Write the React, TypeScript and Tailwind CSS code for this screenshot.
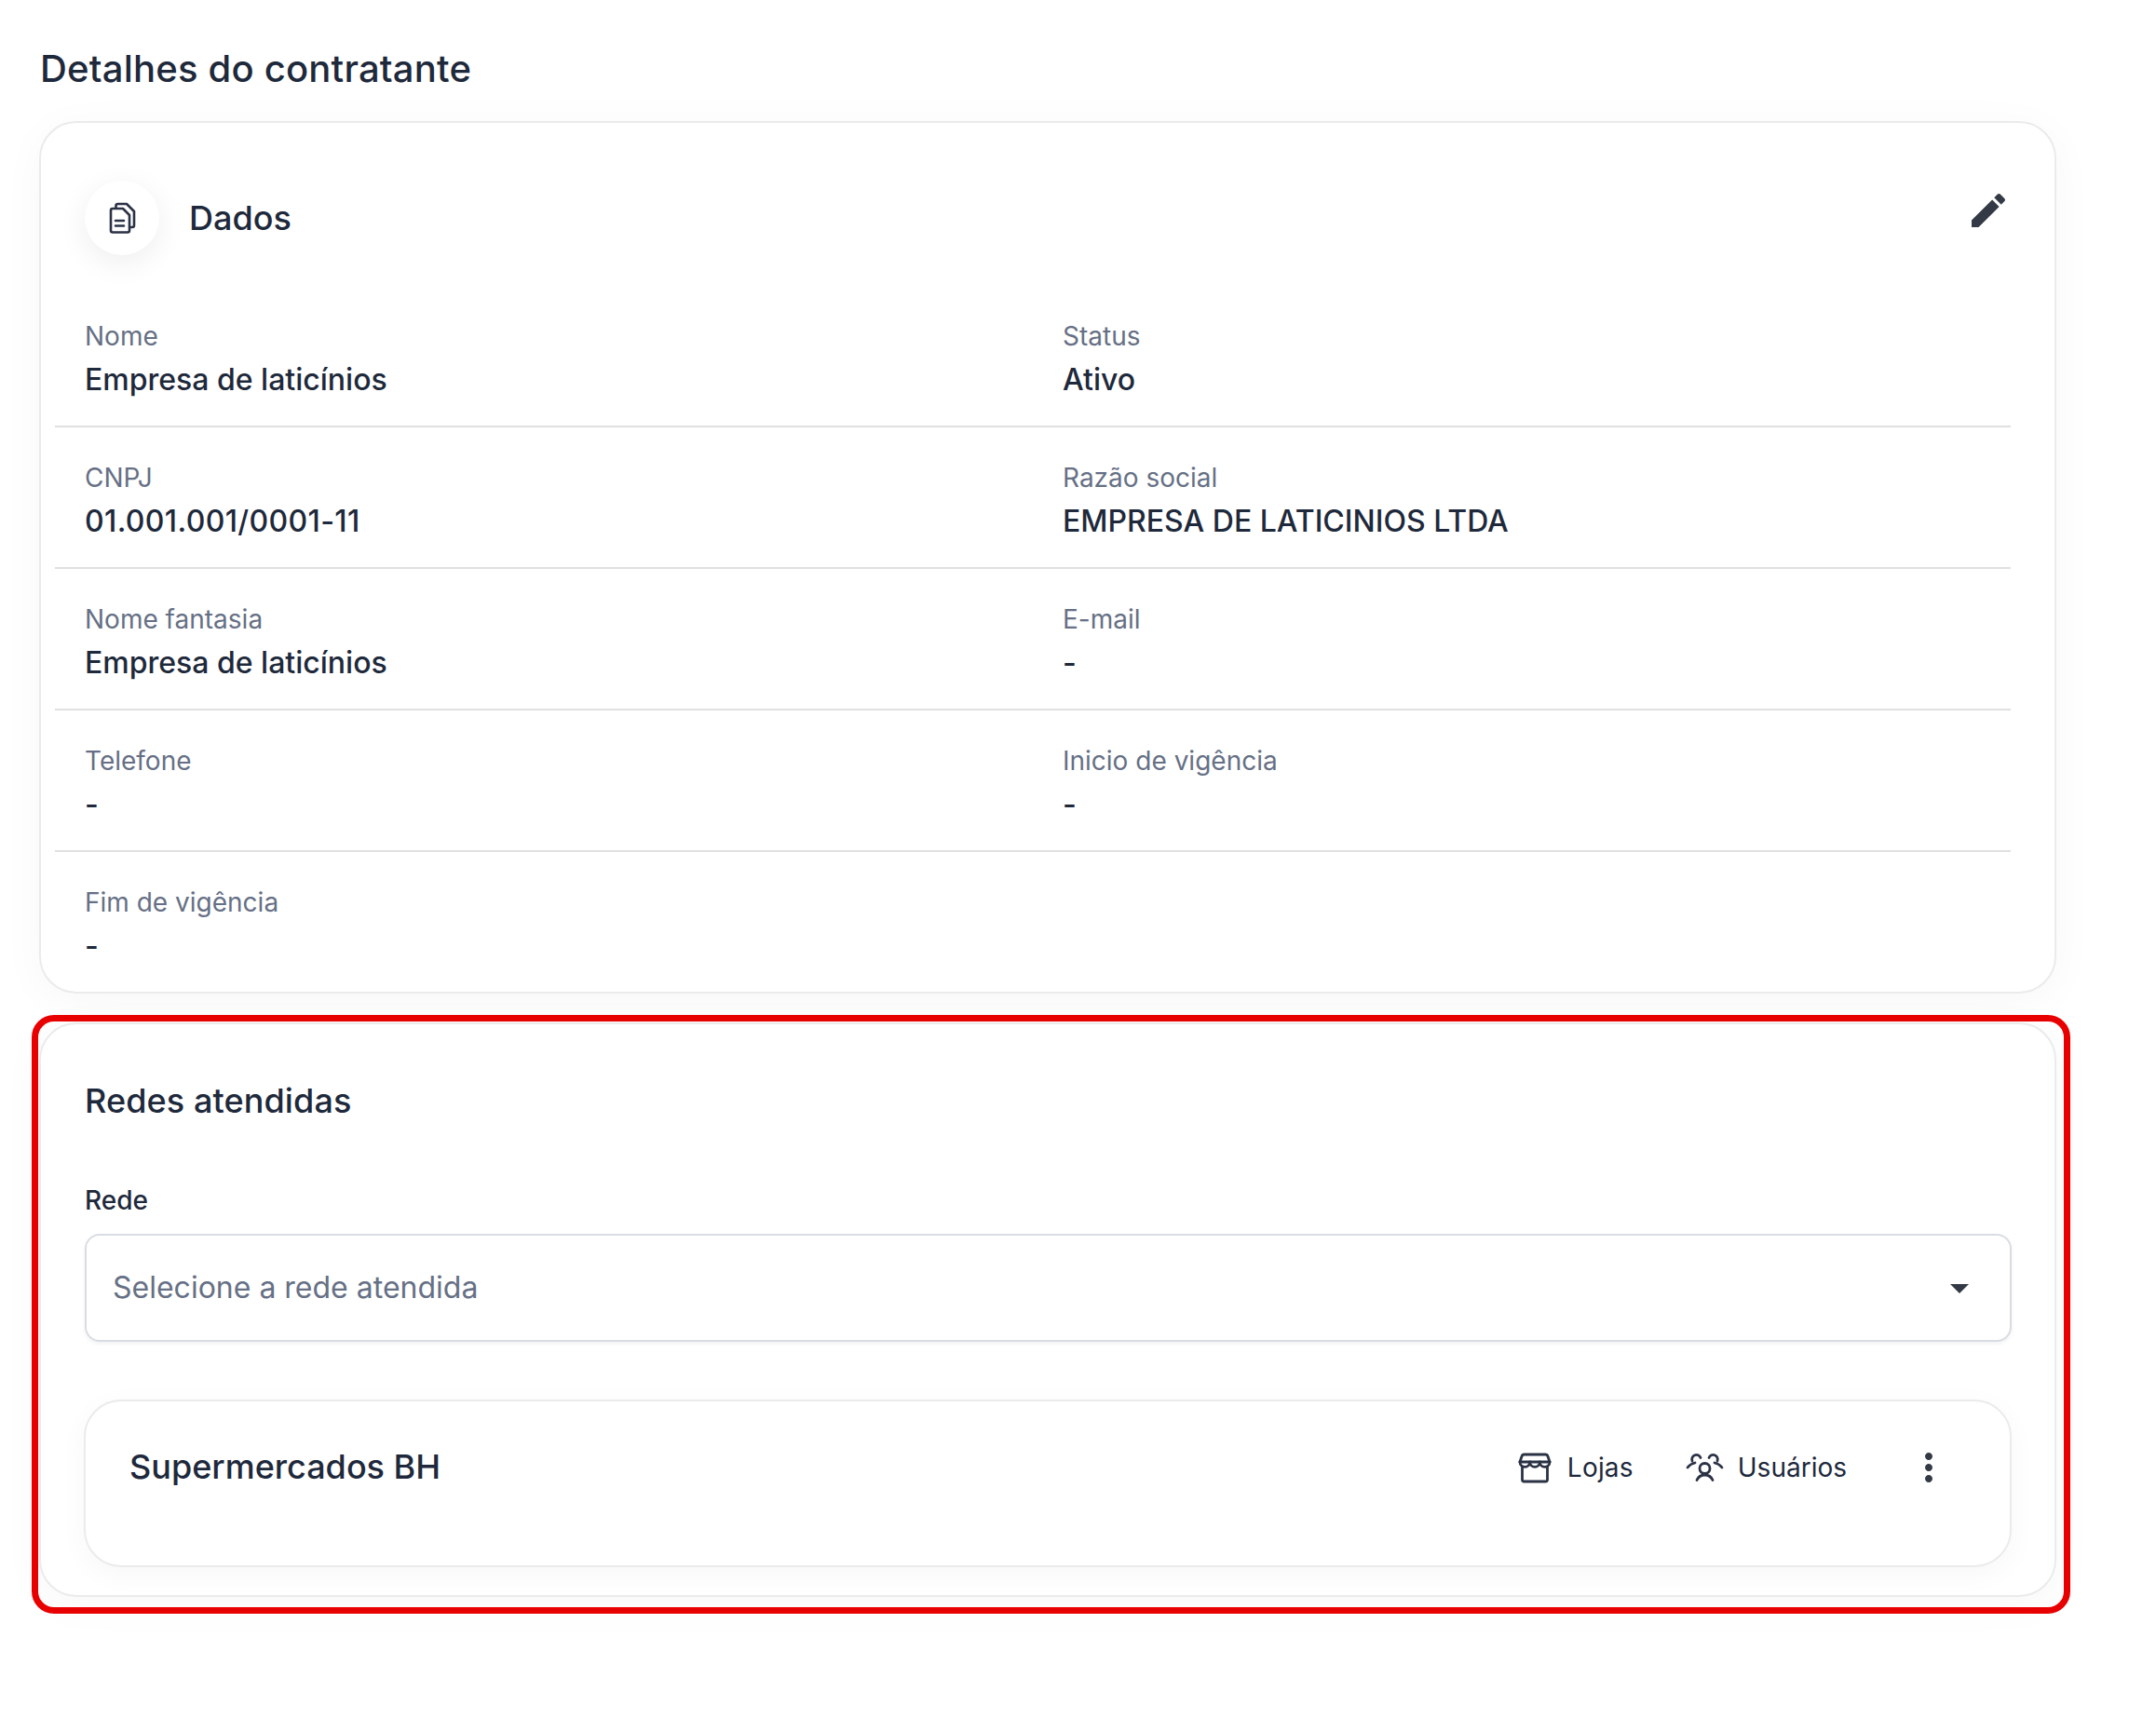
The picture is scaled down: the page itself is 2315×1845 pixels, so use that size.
import type { ReactNode } from 'react'

const rows = [
  [
    { label: 'Nome', value: 'Empresa de laticínios' },
    { label: 'Status', value: 'Ativo' },
  ],
  [
    { label: 'CNPJ', value: '01.001.001/0001-11', className: 'tracking-[0.35px]' },
    { label: 'Razão social', value: 'EMPRESA DE LATICINIOS LTDA' },
  ],
  [
    { label: 'Nome fantasia', value: 'Empresa de laticínios' },
    { label: 'E-mail', value: '-' },
  ],
  [
    { label: 'Telefone', value: '-' },
    { label: 'Inicio de vigência', value: '-' },
  ],
  [{ label: 'Fim de vigência', value: '-' }],
]

function Icon({ children, className }: { children: ReactNode; className?: string }) {
  return (
    <svg viewBox="0 0 48 48" fill="none" stroke="currentColor" strokeWidth="3" strokeLinecap="round" strokeLinejoin="round" className={`h-12 w-12 shrink-0 ${className ?? ''}`}>
      {children}
    </svg>
  )
}

function Field({ label, value, className }: { label: string; value: string; className?: string }) {
  return (
    <div className="px-8">
      <div className="text-[28px] leading-10 text-[#667085]">{label}</div>
      <div className={`mt-[3px] text-[32px] font-[450] leading-12 text-[#1e293b] ${className ?? ''}`}>{value}</div>
    </div>
  )
}

export default function App() {
  return (
    <div className="min-h-screen bg-white pl-[42px] pt-[46px] font-['Inter',sans-serif] text-[#1e293b]">
      <div className="w-[2166px]">
        <h1 className="mb-[28px] pl-px text-[40px] font-[450] leading-14 tracking-[0.2px]">Detalhes do contratante</h1>

        <section className="rounded-[40px] border-2 border-[#ebebeb] bg-white pl-[15px] pr-[47px] pt-[62px] shadow-[0_8px_48px_rgba(0,0,0,0.035)]">
          <div className="flex items-start justify-between">
            <div className="flex items-center gap-8 pl-8">
              <div className="flex h-20 w-20 items-center justify-center rounded-full bg-white shadow-[0_8px_32px_rgba(0,0,0,0.07)]">
                <Icon className="text-[#2b3245]">
                  <path strokeWidth="2.6" d="M14 14H25L32 21V37.5a2 2 0 0 1-2 2H14a2 2 0 0 1-2-2V16a2 2 0 0 1 2-2Z" />
                  <path strokeWidth="2.6" d="M17.5 13V11a2 2 0 0 1 2-2H29L37 17V32a2 2 0 0 1-2 2H32.5" />
                  <path strokeWidth="2.6" d="M17 27H26M17 32.5H26" />
                </Icon>
              </div>
              <h2 className="text-[36px] font-[450] leading-12">Dados</h2>
            </div>
            <svg viewBox="0 0 24 24" fill="#333a45" className="mt-2 h-12 w-12">
              <path d="M3 17.25V21h3.75L17.81 9.94l-3.75-3.75L3 17.25zM20.71 7.04c.39-.39.39-1.02 0-1.41l-2.34-2.34c-.39-.39-1.02-.39-1.41 0l-1.83 1.83 3.75 3.75 1.83-1.83z" />
            </svg>
          </div>

          <div className="mt-[33px]">
            {rows.map((row, i) => (
              <div key={i} className={`grid grid-cols-2 pb-[25px] pt-[34px] ${i < rows.length - 1 ? 'border-b-2 border-[#e0e0e0]' : ''}`}>
                {row.map((f) => (
                  <Field key={f.label} label={f.label} value={f.value} className={f.className} />
                ))}
              </div>
            ))}
          </div>
        </section>

        <section className="relative mt-[31px] rounded-[40px] border-2 border-[#ebebeb] bg-white pb-[30px] pl-[46px] pr-[46px] pt-[58px] shadow-[0_8px_48px_rgba(0,0,0,0.035)]">
          <div className="pointer-events-none absolute -bottom-[20px] -left-[10px] -right-[17px] -top-[10px] rounded-[24px] border-[7px] border-[#e80000]" />

          <h2 className="pl-px text-[36px] font-[450] leading-12 tracking-[0.1px]">Redes atendidas</h2>

          <label className="mt-[63px] block pl-px text-[28px] font-medium leading-10">Rede</label>
          <div className="ml-px mt-4 flex h-[116px] items-center justify-between rounded-2xl border-2 border-[#d9dde3] bg-white pl-[28px] pr-[30px] shadow-[0_2px_4px_rgba(0,0,0,0.06)]">
            <span className="text-[32px] text-[#667085]">Selecione a rede atendida</span>
            <svg viewBox="0 0 24 24" fill="#333a45" className="h-12 w-12">
              <path d="M7 10l5 5 5-5z" />
            </svg>
          </div>

          <div className="mt-[62px] flex h-[180px] items-start justify-between rounded-[40px] border-2 border-[#ebebeb] bg-white pl-[47px] pr-[63px] pt-[46px] shadow-[0_8px_32px_rgba(0,0,0,0.035)]">
            <h3 className="text-[36px] font-[450] leading-12">Supermercados BH</h3>
            <div className="mt-px flex items-center">
              <Icon className="text-[#2b3245]">
                <path strokeWidth="2.8" d="M8 18l2-6q.6-2 2.6-2H35.4q2 0 2.6 2l2 6" />
                <path strokeWidth="2.8" d="M8 18H40" />
                <path strokeWidth="2.8" d="M8 18a5.33 5.33 0 0 0 10.67 0a5.33 5.33 0 0 0 10.66 0a5.33 5.33 0 0 0 10.67 0" />
                <path strokeWidth="2.8" d="M10.5 23V37a2 2 0 0 0 2 2H35.5a2 2 0 0 0 2-2V23" />
              </Icon>
              <span className="ml-[11px] text-[28px] leading-10 tracking-[0.2px]">Lojas</span>
              <Icon className="ml-[53px] text-[#2b3245]">
                <circle strokeWidth="2.8" cx="23.5" cy="25" r="5.5" />
                <path strokeWidth="2.8" d="M15 37.5q2.5-5.5 8.5-5.5t8.5 5.5" />
                <path strokeWidth="2.8" d="M10 17a4.5 4.5 0 0 1 9-3.5M5 24q3-4 8-5" />
                <path strokeWidth="2.8" d="M37 17a4.5 4.5 0 0 0-9-3.5M42 24q-3-4-8-5" />
              </Icon>
              <span className="ml-[11px] text-[28px] leading-10">Usuários</span>
              <svg viewBox="0 0 24 24" fill="#333a45" className="ml-[64px] h-12 w-12">
                <path d="M12 8c1.1 0 2-.9 2-2s-.9-2-2-2-2 .9-2 2 .9 2 2 2zm0 2c-1.1 0-2 .9-2 2s.9 2 2 2 2-.9 2-2-.9-2-2-2zm0 6c-1.1 0-2 .9-2 2s.9 2 2 2 2-.9 2-2-.9-2-2-2z" />
              </svg>
            </div>
          </div>
        </section>
      </div>
    </div>
  )
}
